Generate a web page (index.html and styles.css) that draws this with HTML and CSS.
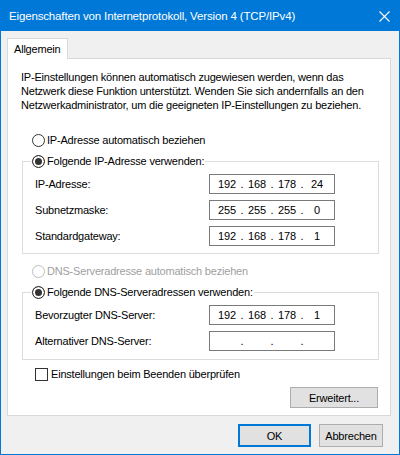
FILE: index.html
```html
<!DOCTYPE html>
<html lang="de">
<head>
<meta charset="utf-8">
<title>Eigenschaften von Internetprotokoll, Version 4 (TCP/IPv4)</title>
<link rel="stylesheet" href="styles.css">
</head>
<body>
<div class="window">
  <div class="titlebar">
    <span class="title">Eigenschaften von Internetprotokoll, Version 4 (TCP/IPv4)</span>
    <svg class="close" width="11" height="11" viewBox="0 0 11 11"><path d="M0.5 0.5 L10.5 10.5 M10.5 0.5 L0.5 10.5" stroke="#fff" stroke-width="1.1" fill="none"/></svg>
  </div>
  <div class="body">
    <div class="tabs"><div class="tab">Allgemein</div></div>
    <div class="panel">
      <p class="intro">IP-Einstellungen können automatisch zugewiesen werden, wenn das<br>Netzwerk diese Funktion unterstützt. Wenden Sie sich andernfalls an den<br>Netzwerkadministrator, um die geeigneten IP-Einstellungen zu beziehen.</p>

      <div class="option opt-auto"><span class="radio"></span><span>IP-Adresse automatisch beziehen</span></div>

      <fieldset class="group group-ip">
        <legend class="option"><span class="radio checked"></span><span>Folgende IP-Adresse verwenden:</span></legend>
        <div class="fields">
          <span class="label">IP-Adresse:</span>
          <div class="ip"><span class="seg">192</span><span class="dot">.</span><span class="seg">168</span><span class="dot">.</span><span class="seg">178</span><span class="dot">.</span><span class="seg">24</span></div>
          <span class="label">Subnetzmaske:</span>
          <div class="ip"><span class="seg">255</span><span class="dot">.</span><span class="seg">255</span><span class="dot">.</span><span class="seg">255</span><span class="dot">.</span><span class="seg">0</span></div>
          <span class="label">Standardgateway:</span>
          <div class="ip"><span class="seg">192</span><span class="dot">.</span><span class="seg">168</span><span class="dot">.</span><span class="seg">178</span><span class="dot">.</span><span class="seg">1</span></div>
        </div>
      </fieldset>

      <div class="option opt-dns disabled"><span class="radio"></span><span>DNS-Serveradresse automatisch beziehen</span></div>

      <fieldset class="group group-dns">
        <legend class="option"><span class="radio checked"></span><span>Folgende DNS-Serveradressen verwenden:</span></legend>
        <div class="fields">
          <span class="label">Bevorzugter DNS-Server:</span>
          <div class="ip"><span class="seg">192</span><span class="dot">.</span><span class="seg">168</span><span class="dot">.</span><span class="seg">178</span><span class="dot">.</span><span class="seg">1</span></div>
          <span class="label">Alternativer DNS-Server:</span>
          <div class="ip"><span class="seg"></span><span class="dot">.</span><span class="seg"></span><span class="dot">.</span><span class="seg"></span><span class="dot">.</span><span class="seg"></span></div>
        </div>
      </fieldset>

      <div class="option opt-check"><span class="checkbox"></span><span>Einstellungen beim Beenden überprüfen</span></div>

      <div class="panel-actions"><button class="btn btn-adv">Erweitert...</button></div>
    </div>
    <div class="actions">
      <button class="btn btn-ok">OK</button>
      <button class="btn btn-cancel">Abbrechen</button>
    </div>
  </div>
</div>
</body>
</html>
```
FILE: styles.css
```css
* { box-sizing: border-box; }
html, body { margin: 0; padding: 0; background: #f0f0f0; }
body {
  font-family: "Liberation Sans", Arial, sans-serif;
  font-size: 11px;
  letter-spacing: -0.2px;
  color: #000;
}
.window {
  width: 400px;
  height: 455px;
  border: 1px solid #0078d7;
  background: #f0f0f0;
  display: flex;
  flex-direction: column;
}
.titlebar {
  height: 30px;
  background: #0078d7;
  color: #fff;
  display: flex;
  align-items: center;
  justify-content: space-between;
  padding: 0 9px 0 8px;
}
.title { font-size: 11.5px; letter-spacing: -0.15px; }
.close { display: block; }
.body {
  padding: 7px 0 0 6px;
  display: flex;
  flex-direction: column;
}
.tabs { display: flex; }
.tab {
  width: 61px;
  height: 21px;
  margin-bottom: -1px;
  border: 1px solid #d9d9d9;
  border-bottom: none;
  background: #fff;
  padding: 3px 0 0 6px;
  line-height: 14px;
  position: relative;
  z-index: 1;
}
.panel {
  width: 384px;
  height: 358px;
  border: 1px solid #d9d9d9;
  background: #fff;
  display: flex;
  flex-direction: column;
}
.intro {
  margin: 0;
  padding: 11px 0 0 13px;
  line-height: 14px;
}
.option {
  display: flex;
  align-items: center;
  height: 14px;
  line-height: 14px;
  white-space: nowrap;
}
.radio {
  width: 13px;
  height: 13px;
  border: 1px solid #333;
  border-radius: 50%;
  background: #fff;
  margin-right: 2px;
  flex: none;
}
.radio.checked {
  background: #333;
  box-shadow: inset 0 0 0 2px #fff;
}
.checkbox {
  width: 13px;
  height: 13px;
  border: 1px solid #333;
  background: #fff;
  margin-right: 3px;
  flex: none;
}
.opt-auto { margin: 21px 0 0 24px; }
.opt-dns { margin: 10px 0 0 24px; }
.disabled { color: #a0a0a0; }
.disabled .radio { border-color: #bcbcbc; }
.opt-check { margin: 7px 0 0 27px; }

.group {
  margin: 7px 0 0 14px;
  width: 357px;
  min-width: 0;
  border: 1px solid #dcdcdc;
  padding: 0 0 7px 8px;
}
.group-dns { padding-bottom: 8px; }
.group legend {
  padding: 0 1px;
  background: #fff;
}
.fields {
  display: grid;
  grid-template-columns: 174px 126px;
  grid-auto-rows: 20px;
  row-gap: 6px;
  margin-top: 6px;
  padding-left: 4px;
  align-items: center;
}
.label { white-space: nowrap; }
.ip {
  height: 20px;
  border: 1px solid #7a7a7a;
  background: #fff;
  display: flex;
  align-items: center;
  padding-left: 4px;
}
.seg { width: 26px; text-align: center; }
.dot { width: 4px; text-align: center; }

.panel-actions {
  display: flex;
  justify-content: flex-end;
  margin-top: 6px;
  padding-right: 12px;
}
.btn {
  font-family: inherit;
  font-size: 11px;
  letter-spacing: -0.2px;
  color: #000;
  background: #e1e1e1;
  border: 1px solid #adadad;
  padding: 0;
  margin: 0;
  height: 23px;
}
.btn-adv { width: 88px; height: 21px; }
.actions {
  display: flex;
  justify-content: flex-end;
  gap: 8px;
  margin-top: 8px;
  padding-right: 16px;
}
.btn-ok { width: 73px; border: 2px solid #0078d7; }
.btn-cancel { width: 64px; }
```
